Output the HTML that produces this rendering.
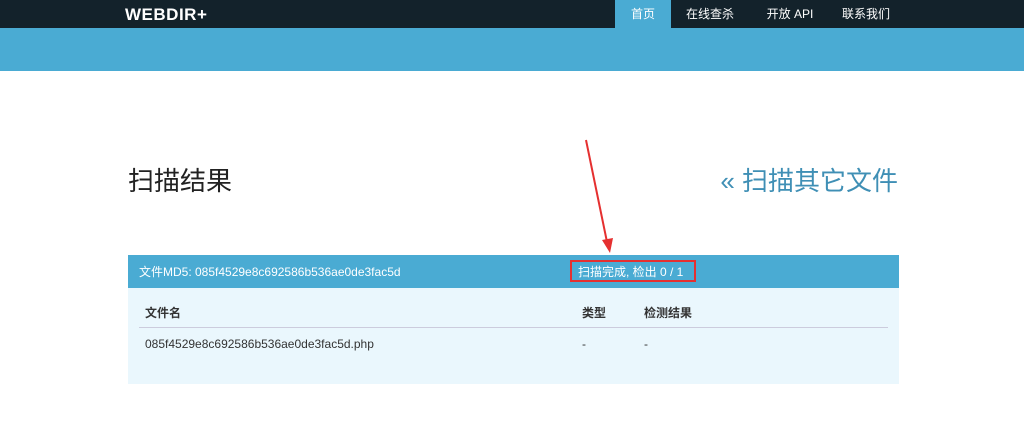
<!DOCTYPE html>
<html><head><meta charset="utf-8"><style>
body{margin:0;width:1024px;height:444px;background:#fff;font-family:"Liberation Sans","Noto Sans CJK SC",sans-serif;position:relative;overflow:hidden}
.nav{position:absolute;left:0;top:0;width:1024px;height:28px;background:#13222b}
.logo{position:absolute;left:125px;top:5px;color:#fff;font-weight:bold;font-size:17px;letter-spacing:0.5px}
.tab{position:absolute;top:0;height:28px;line-height:28px;color:#fff;font-size:12px;text-align:center}
.band{position:absolute;left:0;top:28px;width:1024px;height:43px;background:#4aabd3}
.title{position:absolute;left:128px;top:161px;font-size:26px;color:#222}
.link{position:absolute;right:126px;top:161px;font-size:26px;color:#3f8fb5}
.panel{position:absolute;left:128px;top:255px;width:771px;height:129px;background:#eaf7fd}
.ph{height:33px;background:#4aabd3;color:#fff;font-size:12px;position:relative}
.t{position:absolute;font-size:12px;color:#333}
</style></head><body>
<div class="nav"><div class="logo">WEBDIR+</div>
<div class="tab" style="left:615px;width:56px;background:#4aabd3">首页</div>
<div class="tab" style="left:680px;width:60px">在线查杀</div>
<div class="tab" style="left:760px;width:60px">开放 API</div>
<div class="tab" style="left:836px;width:60px">联系我们</div></div>
<div class="band"></div>
<div class="title">扫描结果</div>
<div class="link">« 扫描其它文件</div>
<div class="panel"><div class="ph">
<span style="position:absolute;left:11px;top:8px">文件MD5: 085f4529e8c692586b536ae0de3fac5d</span>
<span style="position:absolute;left:450px;top:8px">扫描完成, 检出 0 / 1</span>
<div style="position:absolute;left:442px;top:5px;width:126px;height:22px;border:2px solid #e53030;box-sizing:border-box"></div>
</div>
<div class="t" style="left:17px;top:49px;font-weight:bold">文件名</div>
<div class="t" style="left:454px;top:49px;font-weight:bold">类型</div>
<div class="t" style="left:516px;top:49px;font-weight:bold">检测结果</div>
<div style="position:absolute;left:11px;top:72px;width:749px;height:1px;background:#ccd"></div>
<div class="t" style="left:17px;top:82px">085f4529e8c692586b536ae0de3fac5d.php</div>
<div class="t" style="left:454px;top:82px">-</div>
<div class="t" style="left:516px;top:82px">-</div>
</div>
<svg style="position:absolute;left:0;top:0" width="1024" height="444"><line x1="586" y1="140" x2="607" y2="242" stroke="#e53030" stroke-width="2"/><polygon points="602,240 613,238 610,253" fill="#e53030"/></svg>
</body></html>
